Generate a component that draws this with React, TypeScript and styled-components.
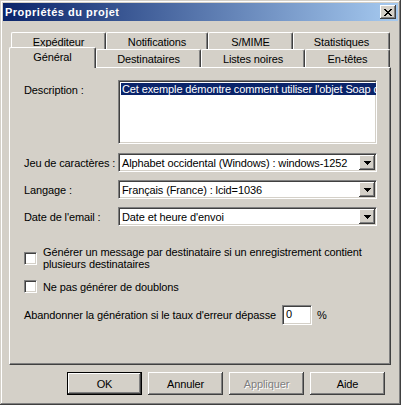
import React from "react";
import styled, {createGlobalStyle} from "styled-components";

const face = "#D4D0C8";
const shadow = "#808080";
const dark = "#404040";
const navy = "#0A246A";

const GlobalStyle = createGlobalStyle`
  html, body {
    margin: 0;
    padding: 0;
    background: ${face};
  }
  body {
    font-family: "Liberation Sans", Arial, sans-serif;
    font-size: 11px;
    letter-spacing: -0.12px;
    color: #000;
  }
  * {
    box-sizing: border-box;
  }
`

const raised = `
  background: ${face};
  box-shadow: inset -1px -1px ${dark}, inset 1px 1px #fff, inset -2px -2px ${shadow}, inset 2px 2px ${face};
`

const sunken = `
  border: 1px solid;
  border-color: ${shadow} #fff #fff ${shadow};
  box-shadow: inset 1px 1px ${dark}, inset -1px -1px ${face};
  background: #fff;
`

const Window = styled.div`
  width: 401px;
  height: 405px;
  padding: 3px;
  background: ${face};
  box-shadow: inset -1px -1px ${dark}, inset 1px 1px ${face}, inset -2px -2px ${shadow}, inset 2px 2px #fff;
  display: flex;
  flex-direction: column;
`

const TitleBar = styled.div`
  height: 18px;
  padding: 0 2px;
  display: flex;
  align-items: center;
  justify-content: space-between;
  background: linear-gradient(to right, ${navy}, #A6CAF0);
  color: #fff;
  font-weight: bold;
  letter-spacing: 0.5px;
`

const CloseButton = styled.div`
  ${raised};
  width: 16px;
  height: 14px;
  display: flex;
  align-items: center;
  justify-content: center;
`

const Body = styled.div`
  padding: 11px 7px 0 6px;
  display: flex;
  flex-direction: column;
`

const TabRow = styled.div<{ $h: number }>`
  height: ${p => p.$h}px;
  padding-left: 2px;
  display: flex;
  align-items: flex-start;
`

const Tab = styled.div<{ $w: number, $h: number, $active?: boolean }>`
  width: ${p => p.$w}px;
  height: ${p => p.$active ? p.$h + 3 : p.$h}px;
  margin-top: ${p => p.$active ? -2 : 0}px;
  margin-left: ${p => p.$active ? -2 : 0}px;
  position: relative;
  z-index: ${p => p.$active ? 1 : 0};
  padding-top: 3px;
  text-align: center;
  background: ${face};
  border-top: 1px solid #fff;
  border-left: 1px solid #fff;
  border-right: 1px solid ${dark};
  border-top-left-radius: 2px;
  border-top-right-radius: 2px;
  box-shadow: inset -1px 0 ${shadow};
  white-space: nowrap;
`

const Panel = styled.div`
  height: 298px;
  padding: 12px 0 0 14px;
  border: 1px solid;
  border-color: #fff ${dark} ${dark} #fff;
  box-shadow: inset -1px -1px ${shadow};
  display: flex;
  flex-direction: column;
`

const FieldRow = styled.div<{ $top?: boolean }>`
  display: flex;
  align-items: ${p => p.$top ? "flex-start" : "center"};
  & + & {
    margin-top: 8px;
  }
`

const Label = styled.div<{ $pad?: number }>`
  width: 94px;
  padding-top: ${p => p.$pad || 0}px;
  white-space: nowrap;
`

const TextArea = styled.div`
  ${sunken};
  width: 259px;
  height: 64px;
  margin-bottom: 1px;
  padding: 2px;
  overflow: hidden;
  white-space: nowrap;
  line-height: 13px;
`

const Selected = styled.span`
  background: ${navy};
  color: #fff;
  padding: 0 3px 0 1px;
`

const Select = styled.div`
  ${sunken};
  width: 259px;
  height: 19px;
  padding: 1px 1px 1px 3px;
  display: flex;
  align-items: center;
  justify-content: space-between;
`

const DropButton = styled.div`
  ${raised};
  width: 16px;
  height: 15px;
  display: flex;
  align-items: center;
  justify-content: center;
`

const Options = styled.div`
  margin-top: 20px;
  display: flex;
  flex-direction: column;
`

const CheckRow = styled.label<{ $gap: number }>`
  display: flex;
  align-items: center;
  gap: 6px;
  margin-bottom: ${p => p.$gap}px;
  line-height: 12px;
`

const CheckBox = styled.span`
  ${sunken};
  flex: none;
  width: 13px;
  height: 13px;
`

const ThresholdRow = styled.div`
  display: flex;
  align-items: center;
`

const NumberBox = styled.div`
  ${sunken};
  width: 30px;
  height: 20px;
  margin: 0 5px 0 6px;
  padding: 2px 2px 0 3px;
  line-height: 13px;
`

const ButtonBar = styled.div`
  margin-top: 7px;
  padding-right: 6px;
  display: flex;
  justify-content: flex-end;
  gap: 6px;
`

const Button = styled.div<{ $default?: boolean, $disabled?: boolean }>`
  width: 75px;
  height: 23px;
  display: flex;
  align-items: center;
  justify-content: center;
  background: ${face};
  color: ${p => p.$disabled ? shadow : "#000"};
  text-shadow: ${p => p.$disabled ? "1px 1px #fff" : "none"};
  box-shadow: ${p => p.$default
    ? `inset 0 0 0 1px #000, inset -2px -2px ${dark}, inset 2px 2px #fff, inset -3px -3px ${shadow}`
    : `inset -1px -1px ${dark}, inset 1px 1px #fff, inset -2px -2px ${shadow}, inset 2px 2px ${face}`};
`

function CloseGlyph() {
    const rows = ["XX....XX", ".XX..XX.", "..XXXX..", "...XX...", "..XXXX..", ".XX..XX.", "XX....XX"]
    return <svg width={8} height={7} shapeRendering="crispEdges">
        {rows.map((r, y) => r.split("").map((c, x) => c === "X" &&
            <rect key={`${x}-${y}`} x={x} y={y} width={1} height={1} fill="#000"/>))}
    </svg>
}

function Arrow() {
    return <svg width={7} height={4} shapeRendering="crispEdges">
        <path d="M0 0h7v1h-1v1h-1v1h-1v1h-1v-1h-1v-1h-1v-1h-1z" fill="#000"/>
    </svg>
}

const backTabs = [
    {label: "Expéditeur", w: 95},
    {label: "Notifications", w: 102},
    {label: "S/MIME", w: 85},
    {label: "Statistiques", w: 97},
]

const frontTabs = [
    {label: "Général", w: 87, active: true},
    {label: "Destinataires", w: 105},
    {label: "Listes noires", w: 104},
    {label: "En-têtes", w: 85},
]

const selects = [
    {label: "Jeu de caractères :", value: "Alphabet occidental (Windows) : windows-1252"},
    {label: "Langage :", value: "Français (France) : lcid=1036"},
    {label: "Date de l'email :", value: "Date et heure d'envoi"},
]

export default function App() {
    return <>
        <GlobalStyle/>
        <Window>
            <TitleBar>
                <span>Propriétés du projet</span>
                <CloseButton><CloseGlyph/></CloseButton>
            </TitleBar>
            <Body>
                <TabRow $h={17}>
                    {backTabs.map(t => <Tab key={t.label} $w={t.w} $h={17}>{t.label}</Tab>)}
                </TabRow>
                <TabRow $h={18}>
                    {frontTabs.map(t => <Tab key={t.label} $w={t.w} $h={18} $active={t.active}>{t.label}</Tab>)}
                </TabRow>
                <Panel>
                    <FieldRow $top>
                        <Label $pad={4}>Description :</Label>
                        <TextArea>
                            <Selected>Cet exemple démontre comment utiliser l'objet Soap d'EmailVerify</Selected>
                        </TextArea>
                    </FieldRow>
                    {selects.map(s => <FieldRow key={s.label}>
                        <Label>{s.label}</Label>
                        <Select>
                            <span>{s.value}</span>
                            <DropButton><Arrow/></DropButton>
                        </Select>
                    </FieldRow>)}
                    <Options>
                        <CheckRow $gap={10}>
                            <CheckBox/>
                            <span>Générer un message par destinataire si un enregistrement contient<br/>plusieurs destinataires</span>
                        </CheckRow>
                        <CheckRow $gap={12}>
                            <CheckBox/>
                            <span>Ne pas générer de doublons</span>
                        </CheckRow>
                        <ThresholdRow>
                            <span>Abandonner la génération si le taux d'erreur dépasse</span>
                            <NumberBox>0</NumberBox>
                            <span>%</span>
                        </ThresholdRow>
                    </Options>
                </Panel>
                <ButtonBar>
                    <Button $default>OK</Button>
                    <Button>Annuler</Button>
                    <Button $disabled>Appliquer</Button>
                    <Button>Aide</Button>
                </ButtonBar>
            </Body>
        </Window>
    </>
}
